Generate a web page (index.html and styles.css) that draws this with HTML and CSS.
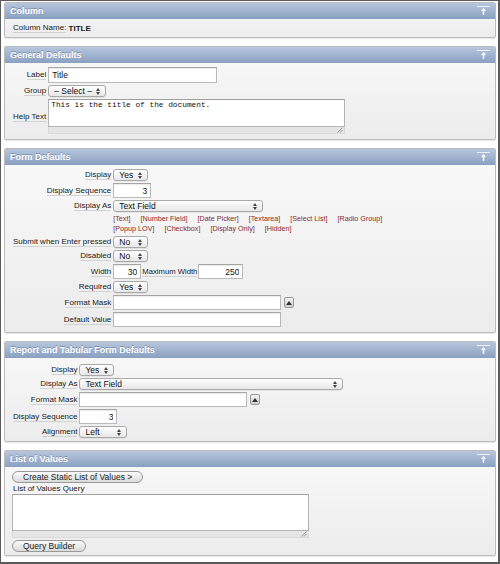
FILE: index.html
```html
<!DOCTYPE html>
<html>
<head>
<meta charset="utf-8">
<link rel="stylesheet" href="styles.css">
</head>
<body>
<div class="frame">

  <section class="panel">
    <div class="phead"><span>Column</span>
      <svg class="collapse" width="13" height="10" viewBox="0 0 13 10"><rect x="0" y="0" width="13" height="1" fill="#eef2f8"/><path d="M6.5 2 L9 5 L7.2 5 L7.2 9 L5.8 9 L5.8 5 L4 5 Z" fill="#fff"/></svg>
    </div>
    <div class="pbody colbody"><span class="lbl">Column Name:</span>&nbsp;<b>TITLE</b></div>
  </section>

  <section class="panel">
    <div class="phead"><span>General Defaults</span>
      <svg class="collapse" width="13" height="10" viewBox="0 0 13 10"><rect x="0" y="0" width="13" height="1" fill="#eef2f8"/><path d="M6.5 2 L9 5 L7.2 5 L7.2 9 L5.8 9 L5.8 5 L4 5 Z" fill="#fff"/></svg>
    </div>
    <div class="pbody form gen">
      <div class="lc"><span class="lbl">Label</span></div>
      <div class="fld"><input class="inp w169" type="text" value="Title"></div>
      <div class="lc"><span class="lbl">Group</span></div>
      <div class="fld"><span class="sel w58">– Select –<svg class="arr" width="4" height="7" viewBox="0 0 4 7"><path d="M0 3 L2 0 L4 3 Z M0 4 L2 7 L4 4 Z" fill="#444"/></svg></span></div>
      <div class="lc"><span class="lbl">Help Text</span></div>
      <div class="fld"><div class="ta w297"><textarea class="tah28">This is the title of the document.</textarea><div class="grip"><svg width="6" height="6" viewBox="0 0 6 6"><path d="M0.5 5.5 L5.5 0.5 M3 5.5 L5.5 3" stroke="#888" stroke-width="0.8"/></svg></div></div></div>
    </div>
  </section>

  <section class="panel">
    <div class="phead"><span>Form Defaults</span>
      <svg class="collapse" width="13" height="10" viewBox="0 0 13 10"><rect x="0" y="0" width="13" height="1" fill="#eef2f8"/><path d="M6.5 2 L9 5 L7.2 5 L7.2 9 L5.8 9 L5.8 5 L4 5 Z" fill="#fff"/></svg>
    </div>
    <div class="pbody form fd">
      <div class="lc"><span class="lbl">Display</span></div>
      <div class="fld"><span class="sel w35">Yes<svg class="arr" width="4" height="7" viewBox="0 0 4 7"><path d="M0 3 L2 0 L4 3 Z M0 4 L2 7 L4 4 Z" fill="#444"/></svg></span></div>
      <div class="lc"><span class="lbl">Display Sequence</span></div>
      <div class="fld"><input class="inp num w38" type="text" value="3"></div>
      <div class="lc"><span class="lbl">Display As</span></div>
      <div class="fld"><span class="sel w150">Text Field<svg class="arr" width="4" height="7" viewBox="0 0 4 7"><path d="M0 3 L2 0 L4 3 Z M0 4 L2 7 L4 4 Z" fill="#444"/></svg></span></div>
      <div class="lc"></div>
      <div class="fld links">
        <div class="lline"><a>[Text]</a><a>[Number Field]</a><a>[Date Picker]</a><a>[Textarea]</a><a>[Select List]</a><a>[Radio Group]</a></div>
        <div class="lline"><a>[Popup LOV]</a><a>[Checkbox]</a><a>[Display Only]</a><a>[Hidden]</a></div>
      </div>
      <div class="lc"><span class="lbl">Submit when Enter pressed</span></div>
      <div class="fld"><span class="sel w35">No<svg class="arr" width="4" height="7" viewBox="0 0 4 7"><path d="M0 3 L2 0 L4 3 Z M0 4 L2 7 L4 4 Z" fill="#444"/></svg></span></div>
      <div class="lc"><span class="lbl">Disabled</span></div>
      <div class="fld"><span class="sel w35">No<svg class="arr" width="4" height="7" viewBox="0 0 4 7"><path d="M0 3 L2 0 L4 3 Z M0 4 L2 7 L4 4 Z" fill="#444"/></svg></span></div>
      <div class="lc"><span class="lbl">Width</span></div>
      <div class="fld"><input class="inp num w28" type="text" value="30"><span class="lbl inl">Maximum Width</span><input class="inp num w45" type="text" value="250"></div>
      <div class="lc"><span class="lbl">Required</span></div>
      <div class="fld"><span class="sel w35">Yes<svg class="arr" width="4" height="7" viewBox="0 0 4 7"><path d="M0 3 L2 0 L4 3 Z M0 4 L2 7 L4 4 Z" fill="#444"/></svg></span></div>
      <div class="lc"><span class="lbl">Format Mask</span></div>
      <div class="fld"><input class="inp w168" type="text" value=""><span class="pick"><svg width="6" height="4" viewBox="0 0 6 4"><path d="M0 4 L3 0 L6 4 Z" fill="#333"/></svg></span></div>
      <div class="lc"><span class="lbl">Default Value</span></div>
      <div class="fld"><input class="inp w168" type="text" value=""></div>
    </div>
  </section>

  <section class="panel">
    <div class="phead"><span>Report and Tabular Form Defaults</span>
      <svg class="collapse" width="13" height="10" viewBox="0 0 13 10"><rect x="0" y="0" width="13" height="1" fill="#eef2f8"/><path d="M6.5 2 L9 5 L7.2 5 L7.2 9 L5.8 9 L5.8 5 L4 5 Z" fill="#fff"/></svg>
    </div>
    <div class="pbody form rt">
      <div class="lc"><span class="lbl">Display</span></div>
      <div class="fld"><span class="sel w35">Yes<svg class="arr" width="4" height="7" viewBox="0 0 4 7"><path d="M0 3 L2 0 L4 3 Z M0 4 L2 7 L4 4 Z" fill="#444"/></svg></span></div>
      <div class="lc"><span class="lbl">Display As</span></div>
      <div class="fld"><span class="sel w264">Text Field<svg class="arr" width="4" height="7" viewBox="0 0 4 7"><path d="M0 3 L2 0 L4 3 Z M0 4 L2 7 L4 4 Z" fill="#444"/></svg></span></div>
      <div class="lc"><span class="lbl">Format Mask</span></div>
      <div class="fld"><input class="inp w168" type="text" value=""><span class="pick"><svg width="6" height="4" viewBox="0 0 6 4"><path d="M0 4 L3 0 L6 4 Z" fill="#333"/></svg></span></div>
      <div class="lc"><span class="lbl">Display Sequence</span></div>
      <div class="fld"><input class="inp num w38" type="text" value="3"></div>
      <div class="lc"><span class="lbl">Alignment</span></div>
      <div class="fld"><span class="sel w48">Left<svg class="arr" width="4" height="7" viewBox="0 0 4 7"><path d="M0 3 L2 0 L4 3 Z M0 4 L2 7 L4 4 Z" fill="#444"/></svg></span></div>
    </div>
  </section>

  <section class="panel last">
    <div class="phead"><span>List of Values</span>
      <svg class="collapse" width="13" height="10" viewBox="0 0 13 10"><rect x="0" y="0" width="13" height="1" fill="#eef2f8"/><path d="M6.5 2 L9 5 L7.2 5 L7.2 9 L5.8 9 L5.8 5 L4 5 Z" fill="#fff"/></svg>
    </div>
    <div class="pbody lov">
      <div><span class="btn">Create Static List of Values &gt;</span></div>
      <div class="qlabel">List of Values Query</div>
      <div class="ta w297"><textarea class="tah37"></textarea><div class="grip"><svg width="6" height="6" viewBox="0 0 6 6"><path d="M0.5 5.5 L5.5 0.5 M3 5.5 L5.5 3" stroke="#888" stroke-width="0.8"/></svg></div></div>
      <div class="btnrow"><span class="btn">Query Builder</span></div>
    </div>
  </section>

</div>
</body>
</html>
```
FILE: styles.css
```css
* { box-sizing: border-box; }
html, body { margin: 0; padding: 0; }
body {
  width: 500px;
  height: 564px;
  font-family: "Liberation Sans", Arial, sans-serif;
  font-size: 8px;
  color: #1a1a1a;
  background: #fff;
}
.frame {
  width: 500px;
  height: 564px;
  border-style: solid;
  border-color: #5b5b5b;
  border-width: 1px 2px 2px 1px;
  padding: 1px 2px 0 3px;
  background: #fff;
}
.panel {
  border: 1px solid #bcbcbc;
  border-radius: 2px;
  margin-bottom: 8px;
  background: linear-gradient(#f9f9f9, #ececec);
  box-shadow: 0 1px 1px rgba(0,0,0,0.1);
  overflow: hidden;
}
.panel.last { margin-bottom: 0; }
.phead {
  height: 16px;
  display: flex;
  align-items: center;
  justify-content: space-between;
  padding: 0 5px;
  background: linear-gradient(#b7c6dc, #8aa0c1);
  color: #fff;
  font-weight: bold;
  font-size: 9px;
  text-shadow: 0 -1px 0 rgba(40,60,100,0.35);
}
.collapse { display: block; }
.pbody { padding-left: 7px; padding-right: 7px; }
.colbody {
  height: 18px;
  display: flex;
  align-items: center;
  padding-left: 8px;
}
.colbody b { font-weight: bold; }
.lbl {
  border-bottom: 1px solid #d2d2d2;
  line-height: 9px;
  white-space: nowrap;
}
.form {
  display: grid;
  grid-template-columns: auto 1fr;
  column-gap: 2px;
  row-gap: 2px;
  padding-left: 8px;
}
.gen { padding-top: 4px; padding-bottom: 5px; }
.fd { padding-top: 4px; padding-bottom: 5px; }
.rt { padding-top: 6px; padding-bottom: 3px; }
.lc {
  display: flex;
  align-items: center;
  justify-content: flex-end;
}
.fld {
  display: flex;
  align-items: center;
}
.inp {
  height: 15px;
  border: 1px solid #b9b9b9;
  border-top-color: #a4a4a4;
  background: #fff;
  box-shadow: inset 0 1px 1px rgba(0,0,0,0.08);
  font-family: "Liberation Sans", Arial, sans-serif;
  font-size: 8.5px;
  color: #111;
  padding: 0 3px;
  margin: 0;
  outline: none;
}
.gen .inp { height: 16px; }
.num { text-align: right; }
.w28 { width: 28px; }
.w38 { width: 38px; }
.w45 { width: 45px; }
.w168 { width: 168px; }
.w169 { width: 169px; }
.w35 { width: 35px; }
.w48 { width: 48px; }
.w58 { width: 58px; }
.w150 { width: 150px; }
.w264 { width: 264px; }
.w297 { width: 297px; }
.inl { margin: 0 1px 0 1px; font-size: 7.7px; }
.sel {
  position: relative;
  display: flex;
  align-items: center;
  height: 12px;
  border: 1px solid #a9a9a9;
  border-radius: 3px;
  background: linear-gradient(#ffffff, #e7e7e7);
  box-shadow: 0 1px 0 rgba(0,0,0,0.06);
  padding-left: 5px;
  font-size: 8.5px;
  color: #111;
  white-space: nowrap;
}
.arr {
  position: absolute;
  right: 5px;
  top: 2px;
}
.links {
  flex-direction: column;
  align-items: flex-start;
  font-size: 7.2px;
  line-height: 10px;
  height: 20px;
}
.lline { display: flex; column-gap: 10px; }
.links a { color: #8a2a2a; text-decoration: none; }
.pick {
  display: flex;
  align-items: center;
  justify-content: center;
  width: 10px;
  height: 11px;
  margin-left: 3px;
  border: 1px solid #9a9a9a;
  border-radius: 2px;
  background: linear-gradient(#f4f4f4, #cfcfcf);
}
.pick svg { display: block; }
.ta { display: flex; flex-direction: column; }
.ta textarea {
  display: block;
  width: 100%;
  border: 1px solid #b3b3b3;
  border-top-color: #a0a0a0;
  background: #fff;
  font-family: "Liberation Mono", "Courier New", monospace;
  font-size: 7.8px;
  line-height: 9px;
  color: #111;
  padding: 1px 2px;
  margin: 0;
  resize: none;
  outline: none;
  overflow: hidden;
}
.tah28 { height: 28px; }
.tah37 { height: 37px; }
.grip {
  height: 7px;
  background: #e5e5e5;
  border: 1px solid #dadada;
  border-top: none;
  display: flex;
  justify-content: flex-end;
  align-items: flex-end;
  padding-right: 1px;
}
.grip svg { display: block; }
.lov { padding-top: 4px; padding-bottom: 3px; padding-left: 7px; }
.btn {
  display: inline-flex;
  align-items: center;
  justify-content: center;
  height: 12px;
  padding: 0 10px;
  border: 1px solid #999;
  border-radius: 7px;
  background: linear-gradient(#fbfbfb, #dadada);
  font-size: 8.5px;
  color: #222;
  white-space: nowrap;
}
.qlabel {
  height: 10px;
  line-height: 10px;
  margin-top: 1px;
  padding-left: 1px;
}
.btnrow { margin-top: 2px; }
```
